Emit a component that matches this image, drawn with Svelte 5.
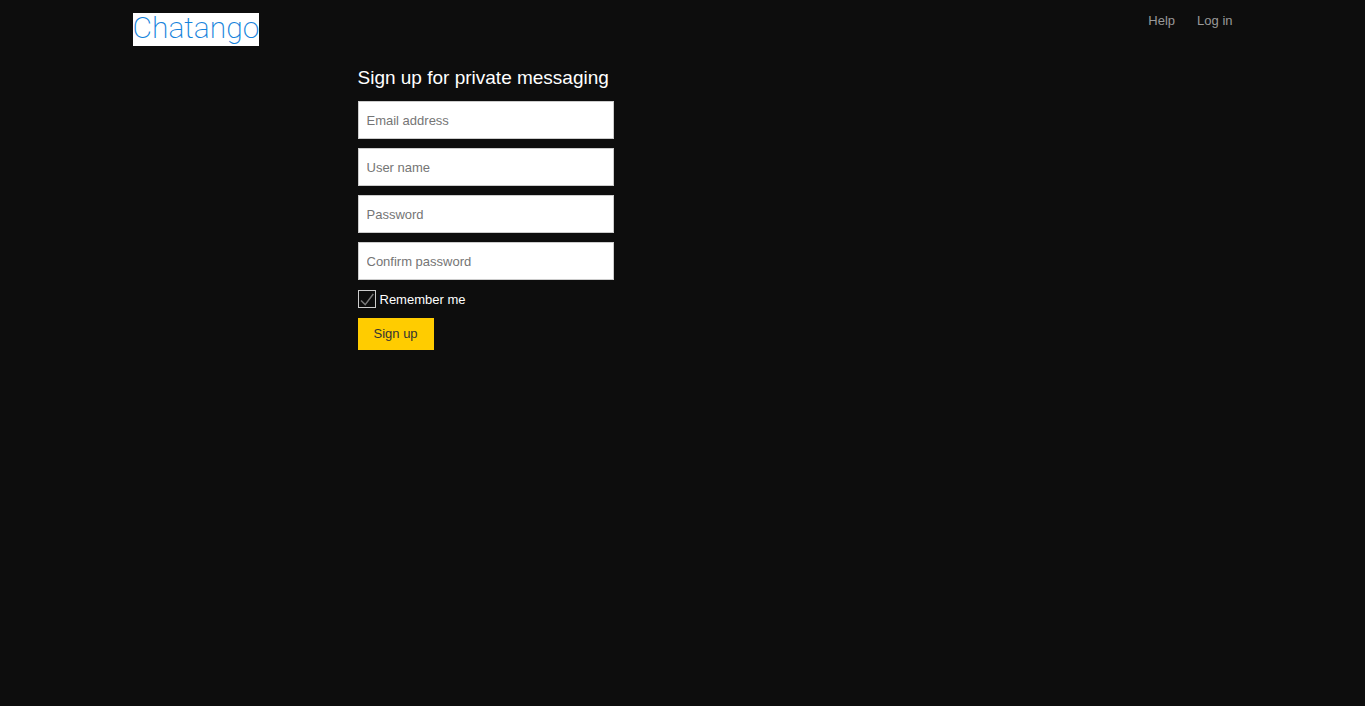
<script>
  const fields = [
    { id: 'email', label: 'Email address', type: 'email' },
    { id: 'username', label: 'User name', type: 'text' },
    { id: 'password', label: 'Password', type: 'password' },
    { id: 'confirm', label: 'Confirm password', type: 'password' }
  ];
  let remember = $state(true);
</script>

<div class="page">
  <header>
    <a class="logo" href="#home">Chatango</a>
    <nav>
      <a href="#help">Help</a>
      <a href="#login">Log in</a>
    </nav>
  </header>
  <main>
    <h1>Sign up for private messaging</h1>
    <form onsubmit={(e) => e.preventDefault()}>
      {#each fields as field (field.id)}
        <input class="field" id={field.id} type={field.type} placeholder={field.label} aria-label={field.label} />
      {/each}
      <label class="remember">
        <span class="box">
          <input type="checkbox" bind:checked={remember} />
          {#if remember}
            <svg viewBox="0 0 18 18" aria-hidden="true"><path d="M3 10.5 7.2 14.6 15.3 4" /></svg>
          {/if}
        </span>
        Remember me
      </label>
      <button type="submit">Sign up</button>
    </form>
  </main>
</div>

<style>
  :global(body) {
    background: #0d0d0d;
  }
  .page {
    max-width: 1100px;
    margin: 0 auto;
    font: 13px/16px Arial, 'Liberation Sans', sans-serif;
    color: #fff;
  }
  header {
    display: flex;
    justify-content: space-between;
    align-items: flex-start;
    padding-top: 13px;
  }
  .logo {
    height: 33px;
    background: #fff;
    color: #1583dc;
    font: 200 30px/30px Roboto, sans-serif;
    text-decoration: none;
  }
  nav {
    display: flex;
    gap: 22px;
  }
  nav a {
    color: #999;
    text-decoration: none;
  }
  main {
    margin: 20px 0 0 225px;
  }
  h1 {
    margin: 0 0 12px;
    font-size: 19px;
    line-height: 23px;
    font-weight: 400;
  }
  form {
    display: flex;
    flex-direction: column;
    align-items: flex-start;
    gap: 9px;
  }
  .field {
    box-sizing: border-box;
    width: 256px;
    max-width: 100%;
    height: 38px;
    padding: 0 8px;
    border: 1px solid #ccc;
    border-radius: 0;
    background: #fff;
    color: #222;
    font: inherit;
  }
  .field::placeholder {
    color: #757575;
  }
  .remember {
    display: flex;
    align-items: flex-start;
    gap: 4px;
    margin-top: 1px;
    line-height: 19px;
  }
  .box {
    display: grid;
    width: 18px;
    height: 18px;
  }
  .box > * {
    grid-area: 1 / 1;
  }
  .box input {
    appearance: none;
    width: 18px;
    height: 18px;
    margin: 0;
    border: 1px solid #ccc;
  }
  .box svg {
    width: 18px;
    height: 18px;
    fill: none;
    stroke: #777;
    stroke-width: 1.5;
    pointer-events: none;
  }
  button {
    height: 32px;
    padding: 0 16px;
    border: 0;
    background: #fc0;
    color: #333;
    font: inherit;
  }
</style>
